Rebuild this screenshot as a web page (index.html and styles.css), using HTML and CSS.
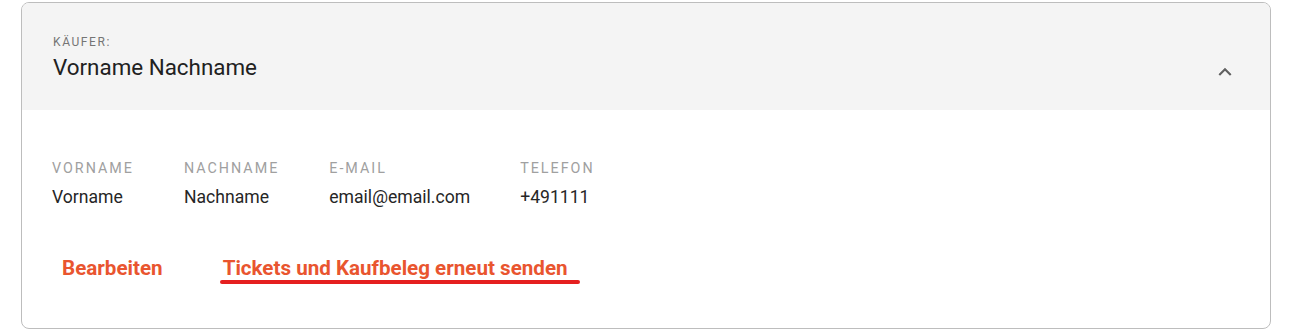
FILE: index.html
```html
<!DOCTYPE html>
<html lang="de">
<head>
    <meta charset="UTF-8">
    <title>Käufer</title>
    <link rel="stylesheet" href="styles.css">
</head>
<body>

    <div class="card">
        <!-- Header -->
        <div class="card-header">
            <div class="buyer">
                <div class="buyer-label">Käufer:</div>
                <div class="buyer-name">Vorname Nachname</div>
            </div>
            <svg class="chevron" width="26" height="26" viewBox="0 0 24 24">
                <path d="M12 8l-6 6 1.41 1.41L12 10.83l4.59 4.58L18 14z" fill="#616161"/>
            </svg>
        </div>

        <!-- Details -->
        <div class="card-body">
            <div class="fields">
                <div class="field">
                    <div class="field-label">Vorname</div>
                    <div class="field-value">Vorname</div>
                </div>
                <div class="field">
                    <div class="field-label">Nachname</div>
                    <div class="field-value">Nachname</div>
                </div>
                <div class="field">
                    <div class="field-label">E-Mail</div>
                    <div class="field-value">email@email.com</div>
                </div>
                <div class="field">
                    <div class="field-label">Telefon</div>
                    <div class="field-value">+491111</div>
                </div>
            </div>

            <div class="actions">
                <button class="btn">Bearbeiten</button>
                <button class="btn marked">Tickets und Kaufbeleg erneut senden</button>
            </div>
        </div>
    </div>

</body>
</html>
```

FILE: styles.css
```css
body {
    font-family: 'Roboto', 'Liberation Sans', sans-serif;
    background-color: #fff;
    margin: 0;
    padding: 2px 30px 0 21px;
}
.card {
    width: 1250px;
    box-sizing: border-box;
    border: 1px solid #bdbdbd;
    border-radius: 8px;
    overflow: hidden;
}
.card-header {
    background-color: #f4f4f4;
    height: 107px;
    box-sizing: border-box;
    padding: 32px 32px 0 31px;
    display: flex;
    justify-content: space-between;
    align-items: flex-start;
}
.buyer-label {
    font-size: 12px;
    line-height: 14px;
    letter-spacing: 1.6px;
    text-transform: uppercase;
    color: #757575;
}
.buyer-name {
    font-size: 22.4px;
    line-height: 28px;
    margin-top: 4px;
    color: #212121;
}
.chevron {
    margin-top: 24px;
}
.card-body {
    padding: 50px 30px 42px 30px;
}
.fields {
    display: flex;
    gap: 50px;
}
.field-label {
    font-size: 14.3px;
    line-height: 16px;
    letter-spacing: 2px;
    text-transform: uppercase;
    color: #a0a0a0;
}
.field-value {
    font-size: 17.6px;
    line-height: 20px;
    margin-top: 11px;
    color: #262626;
}
.actions {
    display: flex;
    gap: 40px;
    margin-top: 43px;
}
.btn {
    position: relative;
    font-family: inherit;
    font-size: 20.6px;
    font-weight: bold;
    color: #e9552f;
    background: none;
    border: none;
    padding: 6px 10px;
    cursor: pointer;
}
.btn.marked::after {
    content: '';
    position: absolute;
    left: 7px;
    right: -2px;
    bottom: 2px;
    height: 4px;
    border-radius: 2px;
    background-color: #e52020;
}
```
